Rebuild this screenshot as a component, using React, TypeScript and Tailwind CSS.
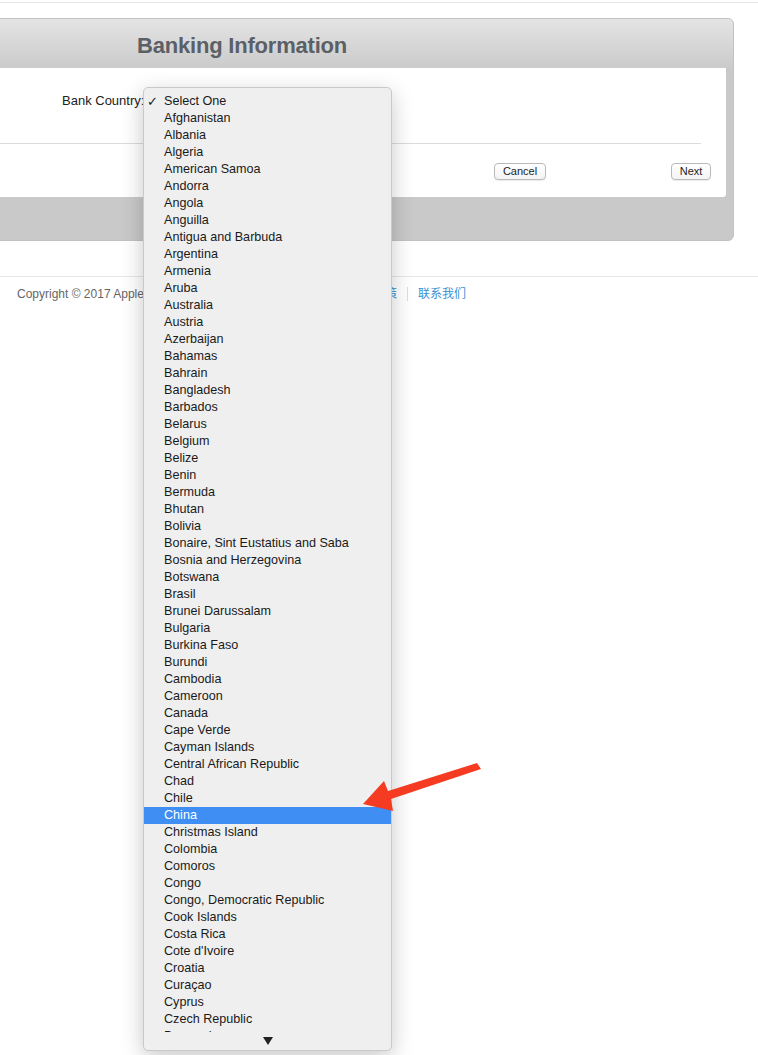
import React from "react";

const countries = [
  "Select One","Afghanistan","Albania","Algeria","American Samoa","Andorra","Angola","Anguilla","Antigua and Barbuda","Argentina","Armenia","Aruba","Australia","Austria","Azerbaijan","Bahamas","Bahrain","Bangladesh","Barbados","Belarus","Belgium","Belize","Benin","Bermuda","Bhutan","Bolivia","Bonaire, Sint Eustatius and Saba","Bosnia and Herzegovina","Botswana","Brasil","Brunei Darussalam","Bulgaria","Burkina Faso","Burundi","Cambodia","Cameroon","Canada","Cape Verde","Cayman Islands","Central African Republic","Chad","Chile","China","Christmas Island","Colombia","Comoros","Congo","Congo, Democratic Republic","Cook Islands","Costa Rica","Cote d'Ivoire","Croatia","Curaçao","Cyprus","Czech Republic","Denmark","Djibouti","Dominica",
];

export default function App() {
  return (
    <div className="relative w-[758px] h-[1055px] overflow-hidden bg-white" style={{ fontFamily: '"Liberation Sans", Arial, sans-serif' }}>
      <div className="h-[3px] border-b border-[#e6e6e6]" />
      <div className="mt-[15px] -ml-[20px] w-[754px] rounded-[6px] border border-[#c2c2c2] bg-[#c9c9c9] overflow-hidden">
        <div className="h-[49px] bg-gradient-to-b from-[#e4e4e4] to-[#cbcbcb] pl-[156px] pt-[4px] flex items-center">
          <span className="text-[22px] font-bold text-[#5b5f66] tracking-[-0.2px]">Banking Information</span>
        </div>
        <div className="ml-[8px] mr-[7px] h-[129px] bg-white rounded-br-[3px] flex flex-col">
          <div className="pt-[24px] pl-[73px] flex items-center h-[41px]">
            <span className="text-[13px] text-[#222] leading-[17px]">Bank Country:</span>
          </div>
          <div className="mt-[34px] ml-0 w-[712px] h-px bg-[#dcdcdc]" />
          <div className="mt-[19px] flex items-center">
            <button className="ml-[505px] w-[52px] h-[17px] rounded-[4px] border border-[#b9b9b9] bg-gradient-to-b from-white to-[#f4f4f4] text-[11px] leading-[15px] text-[#222] shadow-[0_1px_1px_rgba(0,0,0,0.08)]">Cancel</button>
            <button className="ml-[125px] w-[40px] h-[17px] rounded-[4px] border border-[#b9b9b9] bg-gradient-to-b from-white to-[#f4f4f4] text-[11px] leading-[15px] text-[#222] shadow-[0_1px_1px_rgba(0,0,0,0.08)]">Next</button>
          </div>
        </div>
        <div className="h-[43px]" />
      </div>
      <div className="mt-[35px] border-t border-[#e6e6e6]" />
      <div className="mt-[9px] pl-[17px] flex items-center text-[12px] leading-[16px]" style={{ fontFamily: '"Liberation Sans", Arial, "Noto Sans CJK SC", sans-serif' }}>
        <span className="w-[332px] text-[#666] whitespace-nowrap overflow-hidden">Copyright © 2017 Apple Inc. 保留所有权利。</span>
        <span className="text-[#3a8fd3]">隐私政策</span>
        <span className="mx-[10px] w-px h-[14px] bg-[#dddddd]" />
        <span className="text-[#3a8fd3]">联系我们</span>
      </div>

      {/* Dropdown menu overlay */}
      <div className="absolute left-[143px] top-[87px] w-[249px] h-[964px] rounded-[5px] border border-[#c9c9c9] bg-[#efefef] shadow-[0_6px_22px_rgba(0,0,0,0.22)] flex flex-col overflow-hidden">
        <div className="h-[944px] overflow-hidden pt-[5px]">
          {countries.map((c, i) => (
            <div
              key={c}
              className={
                "relative h-[17px] pl-[20px] text-[12.6px] leading-[17px] whitespace-nowrap " +
                (c === "China" ? "bg-[#3e8ef4] text-white" : "text-[#1a1a1a]")
              }
            >
              {i === 0 && <span className="absolute left-[3px] top-0 text-[13px]">✓</span>}
              {c}
            </div>
          ))}
        </div>
        <div className="flex-1 flex items-center justify-center">
          <svg width="10" height="8" viewBox="0 0 10 8"><path d="M0 0 H10 L5 8 Z" fill="#222" /></svg>
        </div>
      </div>

      {/* Red arrow annotation */}
      <svg className="absolute left-0 top-0 pointer-events-none" width="758" height="1055">
        <polygon points="363,804 384,781 388,791 477,763 481,769 391,799 393,811" fill="#f53b22" />
      </svg>
    </div>
  );
}
